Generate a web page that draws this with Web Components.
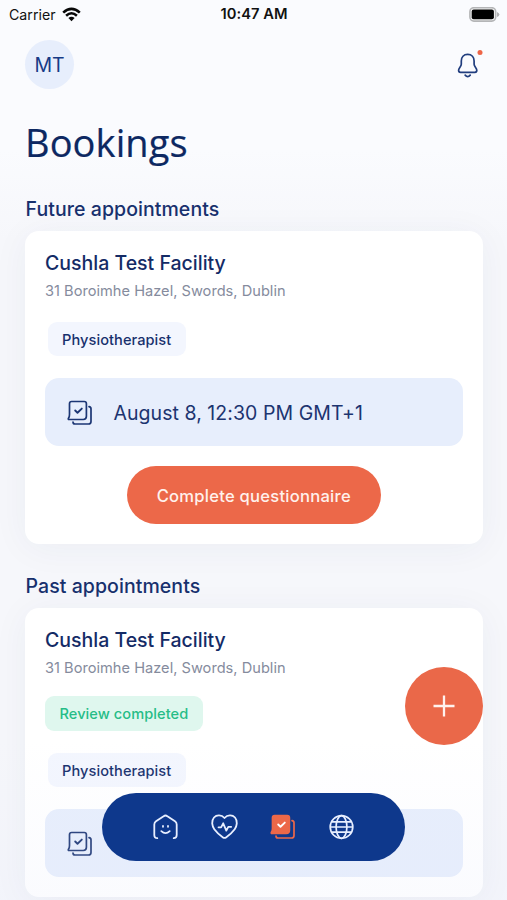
<!DOCTYPE html>
<html lang="en">
<head>
<meta charset="utf-8">
<title>Bookings</title>
<style>
html,body{margin:0;height:900px;overflow:hidden}
body{font-family:Inter,"Liberation Sans",sans-serif;color:#142b66;background:#fafbfe}
</style>
</head>
<body>
<bookings-app></bookings-app>
<script>
const define=(name,html)=>{
  const t=document.createElement('template');t.innerHTML=html;
  customElements.define(name,class extends HTMLElement{
    constructor(){super();this.attachShadow({mode:'open'}).append(t.content.cloneNode(true));}
  });
};

define('status-bar',`<style>
:host{display:grid;grid-template-columns:1fr auto 1fr;align-items:center;height:27px;padding:0 7px 0 8px;color:#111;font-size:14.2px;line-height:27px;box-sizing:border-box}
.l{display:flex;align-items:center;gap:6px;padding-left:1px}
b{font-weight:600;font-size:14.7px;letter-spacing:.05px;padding-top:1px}
.r{justify-self:end;display:flex}
svg{display:block}
</style>
<span class="l"><span>Carrier</span><svg width="19" height="15" viewBox="0 0 19 15" fill="none" stroke="#080808" stroke-width="2.6"><path d="M1.2 5.6Q9.5-2 17.8 5.6M4.1 8.7Q9.5 3.8 14.9 8.7"/><path d="M9.5 14.3 6.4 11Q9.5 8.3 12.6 11Z" fill="#080808" stroke="none"/></svg></span>
<b>10:47 AM</b>
<span class="r"><svg width="31" height="15" viewBox="0 0 31 15"><rect x=".9" y=".7" width="25.800" height="13.400" rx="4" fill="#f4f4f4" stroke="#b4b5b7" stroke-width="1.600"/><rect x="2.700" y="2.500" width="22.200" height="9.800" rx="2" fill="#000"/><path d="M28 5v5q2.400-1 2.400-2.500T28 5" fill="#b0b1b3"/></svg></span>`);

define('user-avatar',`<style>
:host{display:grid;place-items:center;width:49px;height:49px;border-radius:50%;background:#e7eefc;color:#173b86;font-size:19.500px;font-weight:400}
</style><slot></slot>`);

define('bell-button',`<style>
:host{display:block;width:28px;height:32px;margin-top:-2px}svg{display:block}
</style><svg width="28" height="32" viewBox="0 0 28 32"><path d="M12.700 6.400C8.600 6.400 6.300 9.500 6.300 13V16.200C6.300 18.600 3.600 19.800 3.600 22.300Q3.600 24.300 5.500 24.300H19.900Q21.800 24.300 21.800 22.300C21.800 19.800 19.100 18.600 19.100 16.200V13C19.100 9.500 16.800 6.400 12.700 6.400Z" fill="none" stroke="#203d7e" stroke-width="1.700" stroke-linejoin="round"/><path d="M10.200 27.200Q12.700 30.200 15.200 27.200" fill="none" stroke="#203d7e" stroke-width="1.800" stroke-linecap="round"/><circle cx="25" cy="4.500" r="2.500" fill="#ee6547"/></svg>`);

define('page-section',`<style>
:host{display:block}
h2{margin:0 0 9px;padding-left:.5px;font-size:19.500px;line-height:26px;font-weight:480;letter-spacing:.07px;color:#17306d}
</style><h2><slot name="title"></slot></h2><slot></slot>`);

define('appointment-card',`<style>
:host{display:flex;flex-direction:column;align-items:flex-start;box-sizing:border-box;width:457.500px;padding:19px 20px 20px;border-radius:14px;background:#fff;box-shadow:0 4px 36px rgba(35,50,105,.05)}
h3{margin:0;font-size:19.500px;line-height:27px;font-weight:480;color:#142b66}
p{margin:3px 0 20px;font-size:14.600px;line-height:22px;color:#858b9d;letter-spacing:.02px}
</style><h3><slot name="name"></slot></h3><p><slot name="address"></slot></p><slot></slot>`);

define('info-tag',`<style>
:host{display:flex;align-items:center;height:34px;padding:1px 15px 0 14px;margin-left:3px;border-radius:9px;background:#f3f6fe;color:#17306d;font-size:14.600px;font-weight:500;letter-spacing:.06px;box-sizing:border-box}
:host([kind=success]){margin:-3px 0 22px;height:35px;background:#dff7ee;color:#26bd87;padding:0 15px 0 14.500px}
</style><slot></slot>`);

define('stack-icon',`<style>
:host{display:block;width:26px;height:26px;color:#1c3674;--front:none;--tick:currentColor}
svg{display:block}
</style><svg width="26" height="26" viewBox="0 0 26 26" fill="none" stroke="currentColor" stroke-width="1.700" stroke-linejoin="round" stroke-linecap="round"><path d="M4.600 1.500H17.200Q19.400 1.500 19.400 3.700V16.300Q19.400 19.500 16.300 19.500H2.200Q.7 19.500 1.600 18Q2.500 16.700 2.500 14.500V3.700Q2.500 1.500 4.600 1.500Z" fill="var(--front)"/><path d="M6 22Q6 24 8 24H21.500Q24 24 24 21.500V8.800Q24 6.900 22 6.700"/><path d="m8.200 10.500 2.300 2.200 4.300-4.100" stroke="var(--tick)" stroke-width="1.900"/></svg>`);

define('date-row',`<style>
:host{display:flex;align-items:center;gap:20.500px;width:100%;height:68px;padding:2px 0 0 22px;margin-top:22px;box-sizing:border-box;border-radius:14px;background:#e7eefc;color:#1c3470;font-size:19.500px;letter-spacing:.05px}
</style><stack-icon></stack-icon><slot></slot>`);

define('pill-button',`<style>
:host{display:grid;place-items:center;align-self:center;width:254px;height:58px;margin-top:20px;padding-top:1px;box-sizing:border-box;border-radius:29px;background:#ec6849;color:#fff1ec;font-size:16.600px;font-weight:500;letter-spacing:.24px}
</style><slot></slot>`);

define('add-button',`<style>
:host{display:grid;place-items:center;width:78px;height:78px;border-radius:50%;background:#ea6849}
</style><svg width="22" height="22" viewBox="0 0 22 22" stroke="#fff2ee" stroke-width="2.300"><path d="M11 .5v21M.5 11h21"/></svg>`);

define('tab-bar',`<style>
:host{display:flex;align-items:center;justify-content:center;gap:32px;width:303px;height:68px;border-radius:34px;background:#0e388c;box-sizing:border-box}
svg{display:block}
stack-icon{color:#ec6849;--front:#ec6849;--tick:#fff}
</style>
<svg width="27" height="26" viewBox="0 0 27 26" fill="none" stroke="#e8efff" stroke-width="1.800" stroke-linecap="round" stroke-linejoin="round"><path d="M5.300 24.200Q2.300 24.200 2.300 21V10.500Q2.300 8.500 4 7.300L11.600 2.200Q13.500.8 15.400 2.200L23 7.300Q24.700 8.500 24.700 10.500V21Q24.700 24.200 21.700 24.200"/><path d="M9.300 17.200Q13.500 21 17.700 17.200"/><path d="M11 12v.8M16 12v.8"/></svg>
<svg width="27" height="26" viewBox="0 0 27 26" fill="none" stroke="#e8efff" stroke-width="1.800" stroke-linecap="round" stroke-linejoin="round"><path d="M13.500 4C10.500.6 5.600.6 3 3.500.1 6.900 1 12 3.300 15.200 5.800 18.700 9.500 21.600 12 23.400Q13.500 24.500 15 23.400C17.500 21.600 21.200 18.700 23.700 15.200 26 12 26.900 6.900 24 3.500 21.400.6 16.500.6 13.500 4Z"/><path d="M7.500 13.300h2.600l2.100-4 3.100 7.300 2-3.800h2.900"/></svg>
<stack-icon></stack-icon>
<svg width="27" height="26" viewBox="0 0 27 26" fill="none" stroke="#e8efff" stroke-width="1.700"><circle cx="13.500" cy="13" r="11.300"/><ellipse cx="13.500" cy="13" rx="5.400" ry="11.300"/><path d="M3.700 7.800H23.300M2.200 13H24.800M3.700 18.200H23.300"/></svg>`);

define('bookings-app',`<style>
:host{display:block;position:relative;height:900px;overflow:hidden;background:linear-gradient(#fafbfe 0,#fafbfe 150px,#f6f7fb 240px,#f6f7fb 100%)}
header{display:flex;justify-content:space-between;align-items:center;padding:13px 24px 0 25px}
main{padding:0 25px}
h1{margin:27px 0 28px;font:400 38px/52px "Open Sans","Noto Sans",sans-serif;color:#0d2862;letter-spacing:.1px;-webkit-text-stroke:.2px #0d2862}
page-section+page-section{margin-top:29px}
add-button{position:absolute;left:404.500px;top:667px}
tab-bar{position:absolute;left:102px;top:793px}
.fade{position:absolute;inset:740px 0 0;background:linear-gradient(rgba(225,230,250,0),rgba(225,230,250,.16))}
</style>
<status-bar></status-bar>
<header><user-avatar>MT</user-avatar><bell-button></bell-button></header>
<main>
<h1>Bookings</h1>
<page-section><span slot="title">Future appointments</span>
<appointment-card><span slot="name">Cushla Test Facility</span><span slot="address">31 Boroimhe Hazel, Swords, Dublin</span>
<info-tag>Physiotherapist</info-tag><date-row>August 8, 12:30 PM GMT+1</date-row><pill-button>Complete questionnaire</pill-button></appointment-card></page-section>
<page-section><span slot="title">Past appointments</span>
<appointment-card><span slot="name">Cushla Test Facility</span><span slot="address">31 Boroimhe Hazel, Swords, Dublin</span>
<info-tag kind="success">Review completed</info-tag><info-tag>Physiotherapist</info-tag><date-row></date-row></appointment-card></page-section>
</main>
<div class="fade"></div>
<add-button></add-button>
<tab-bar></tab-bar>`);
</script>
</body>
</html>
